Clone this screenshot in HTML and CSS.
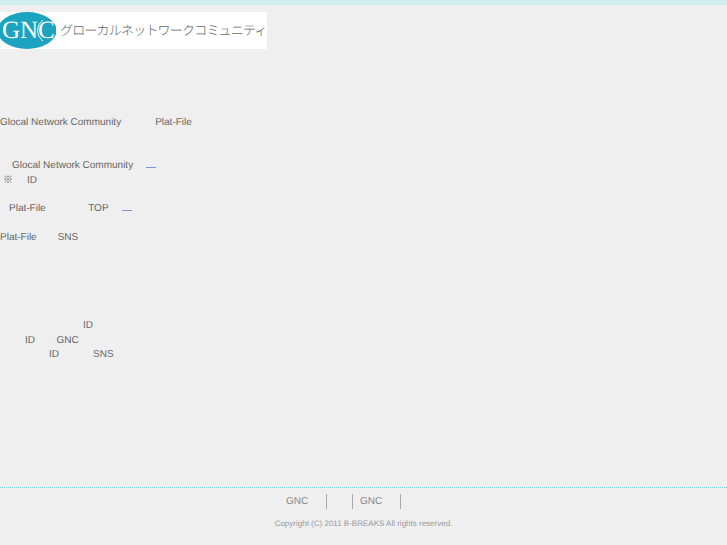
FILE: index.html
```html
<!DOCTYPE html>
<html lang="ja">
<head>
<meta charset="utf-8">
<title>Glocal Network Community</title>
<link rel="stylesheet" href="styles.css">
</head>
<body>
<header class="top-bar"></header>
<div class="logo">
  <svg class="logo-mark" width="56" height="37" viewBox="0 0 56 37" aria-hidden="true">
    <ellipse cx="27" cy="18.5" rx="29.5" ry="18.5" fill="#1ba3c0"/>
    <path d="M43 8 A13 13 0 0 0 43 29" fill="none" stroke="#fff" stroke-width="1"/>
  </svg>
  <span class="logo-gnc">GNC</span>
  <span class="logo-name">グローカルネットワークコミュニティ</span>
</div>
<main class="content">
  <p class="line intro"><span>Glocal Network Community</span><span class="s-intro">Plat-File</span></p>
  <div class="para p1">
    <p class="line"><span class="i12">Glocal Network Community</span><a class="link l1"></a></p>
    <p class="line"><span class="i3">※</span><span class="s-id">ID</span></p>
  </div>
  <p class="line p2"><span class="i9">Plat-File</span><span class="s-top">TOP</span><a class="link l2"></a></p>
  <p class="line p3"><span>Plat-File</span><span class="s-sns">SNS</span></p>
  <div class="para p4">
    <p class="line"><span class="i83">ID</span></p>
    <p class="line"><span class="i25">ID</span><span class="s-gnc">GNC</span></p>
    <p class="line"><span class="i49">ID</span><span class="s-sns2">SNS</span></p>
  </div>
</main>
<footer class="footer">
  <nav class="foot-nav">
    <a class="foot-link first">GNC</a>
    <a class="foot-link second">GNC</a>
  </nav>
  <p class="copy">Copyright (C) 2011 B-BREAKS All rights reserved.</p>
</footer>
</body>
</html>
```
FILE: styles.css
```css
* { box-sizing: border-box; }
html, body { margin: 0; padding: 0; }
body {
  height: 545px;
  overflow: hidden;
  background: #efefef;
  color: #666;
  font-family: "Liberation Sans", Arial, "Noto Sans CJK JP", sans-serif;
  font-size: 10px;
  line-height: 14.4px;
  text-rendering: geometricPrecision;
  display: flex;
  flex-direction: column;
}
.top-bar { height: 5px; background: #cdeeec; flex: none; }
.logo {
  position: relative;
  margin-top: 7px;
  width: 267px;
  height: 37px;
  background: #fff;
  flex: none;
  overflow: hidden;
}
.logo-mark { position: absolute; left: 0; top: 0; }
.logo-gnc {
  position: absolute;
  left: 2px;
  top: 4px;
  font-family: "Liberation Serif", serif;
  font-size: 25px;
  line-height: 30px;
  color: #fff;
}
.logo-name {
  position: absolute;
  left: 60px;
  top: 9px;
  font-family: "Noto Sans CJK JP", sans-serif;
  font-size: 13px;
  font-weight: 300;
  line-height: 18px;
  letter-spacing: -0.8px;
  white-space: nowrap;
  color: #666;
}
.content { flex: 1; padding-top: 67px; }
.line { margin: 0; white-space: nowrap; height: 14.4px; }
.p1 { margin-top: 28.8px; }
.p2 { margin-top: 14.4px; }
.p3 { margin-top: 14.4px; }
.p4 { margin-top: 73.8px; }
.i12 { margin-left: 12px; }
.i3 { margin-left: 3px; }
.i9 { margin-left: 9px; }
.i25 { margin-left: 25px; }
.i49 { margin-left: 49px; }
.i83 { margin-left: 83px; }
.s-intro { margin-left: 34px; }
.s-id { margin-left: 14px; }
.s-top { margin-left: 42.5px; }
.s-sns { margin-left: 21px; }
.s-gnc { margin-left: 21.5px; }
.s-sns2 { margin-left: 34px; }
.link {
  display: inline-block;
  width: 10px;
  height: 9px;
  border-bottom: 1px solid #7a94d8;
  vertical-align: baseline;
}
.l1 { margin-left: 13px; }
.l2 { margin-left: 13px; }
.footer {
  flex: none;
  height: 58px;
  border-top: 1px dotted #6fd5d5;
  color: #999;
}
.foot-nav {
  display: flex;
  margin-top: 6px;
  height: 15px;
  padding-left: 286px;
  color: #888;
  line-height: 15px;
  font-size: 10px;
}
.foot-link { display: block; border-right: 1px solid #aaa; }
.first { width: 41px; }
.second { margin-left: 25px; padding-left: 7px; width: 49px; border-left: 1px solid #aaa; }
.copy {
  margin: 9px 0 0;
  text-align: center;
  font-size: 8px;
  line-height: 12px;
}
```
